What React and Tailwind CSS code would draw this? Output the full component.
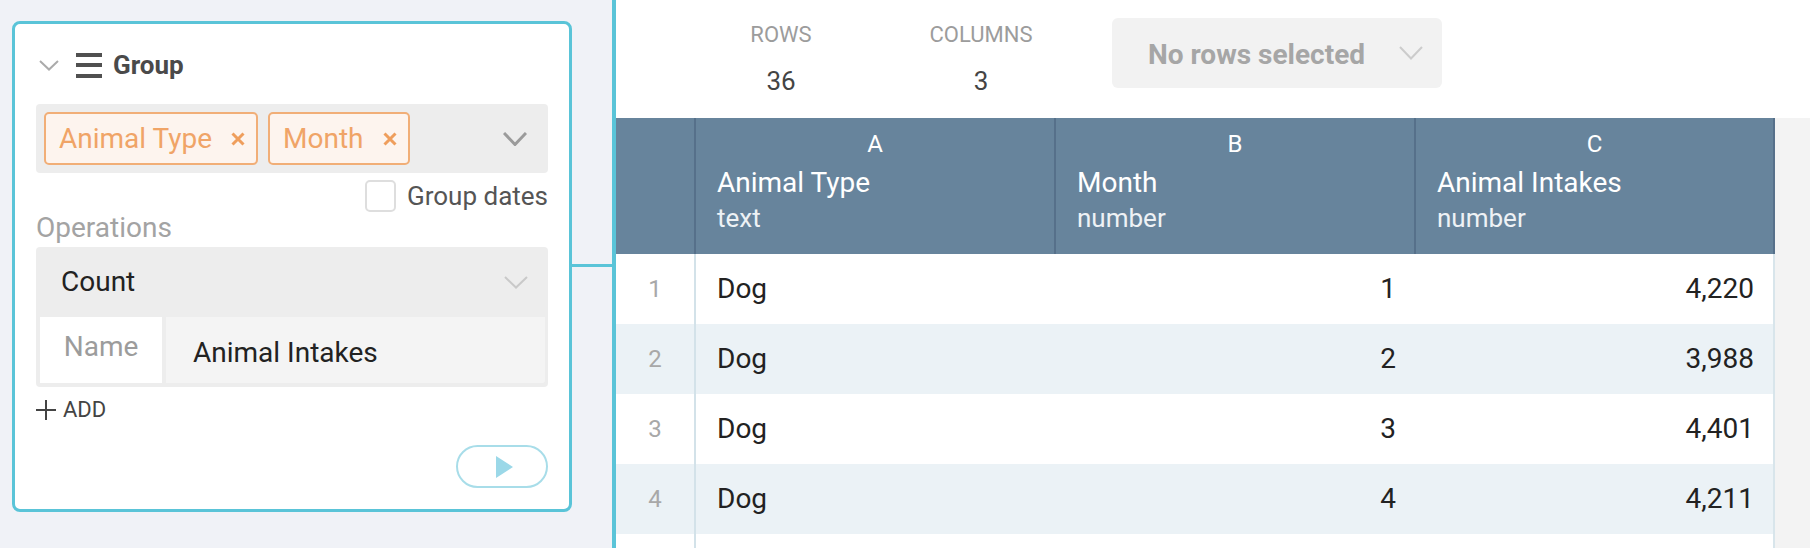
import React from 'react';

const rows = [
  { n: 1, type: 'Dog', month: '1', intakes: '4,220' },
  { n: 2, type: 'Dog', month: '2', intakes: '3,988' },
  { n: 3, type: 'Dog', month: '3', intakes: '4,401' },
  { n: 4, type: 'Dog', month: '4', intakes: '4,211' },
];

const columns = [
  { letter: 'A', name: 'Animal Type', type: 'text' },
  { letter: 'B', name: 'Month', type: 'number' },
  { letter: 'C', name: 'Animal Intakes', type: 'number' },
];

const Chevron = ({ w, h, color, stroke }) => (
  <svg width={w} height={h} viewBox={`0 0 ${w} ${h}`} fill="none">
    <path d={`M1 1 L${w / 2} ${h - 1.5} L${w - 1} 1`} stroke={color} strokeWidth={stroke} />
  </svg>
);

const CloseX = () => (
  <svg width="14" height="14" viewBox="0 0 14 14" fill="none">
    <path d="M1.5 1.5 L12.5 12.5 M12.5 1.5 L1.5 12.5" stroke="#ef9e5c" strokeWidth="3" />
  </svg>
);

const Tag = ({ label }) => (
  <div className="flex h-[53px] items-center gap-[19px] rounded-[5px] border-2 border-[#f1ae77] bg-[#fdf4ee] pl-[13px] pr-[11px]">
    <span className="text-[28px] leading-[32px] text-[#f0a467]">{label}</span>
    <CloseX />
  </div>
);

const GroupCard = () => (
  <div className="ml-[12px] mt-[21px] h-[491px] w-[560px] shrink-0 rounded-[8px] border-[3px] border-[#5ac4d8] bg-white px-[21px] pt-[28px]">
    {/* Header */}
    <div className="flex h-[26px] items-center">
      <div className="ml-[3px]">
        <Chevron w={20} h={11} color="#ababab" stroke={2} />
      </div>
      <div className="ml-[17px] flex h-[25px] w-[26px] flex-col justify-between">
        <span className="h-[4px] bg-[#505050]" />
        <span className="h-[4px] bg-[#505050]" />
        <span className="h-[4px] bg-[#505050]" />
      </div>
      <span className="ml-[11px] text-[26px] font-bold leading-[26px] text-[#4a4a4a]">Group</span>
    </div>

    {/* Group by columns */}
    <div className="mt-[26px] flex h-[69px] items-center rounded-[4px] bg-[#ededed] pl-[8px] pr-[21px]">
      <div className="flex gap-[10px]">
        <Tag label="Animal Type" />
        <Tag label="Month" />
      </div>
      <div className="ml-auto">
        <Chevron w={24} h={14} color="#9b9b9b" stroke={3} />
      </div>
    </div>

    <div className="mt-[7px] flex h-[32px] items-center justify-end">
      <span className="h-[32px] w-[31px] rounded-[5px] border-2 border-[#dedede] bg-white" />
      <span className="ml-[11px] text-[26px] leading-[30px] text-[#555]">Group dates</span>
    </div>

    <div className="mt-[2px] text-[28px] leading-[28px] text-[#a3a3a3]">Operations</div>

    {/* Operation */}
    <div className="mt-[5px] rounded-[4px] bg-[#ededed] px-[4px] pb-[4px]">
      <div className="flex h-[70px] items-center pl-[21px] pr-[16px]">
        <span className="text-[28px] leading-[32px] text-[#222]">Count</span>
        <div className="ml-auto">
          <Chevron w={24} h={13} color="#c9c9c9" stroke={2} />
        </div>
      </div>
      <div className="flex h-[66px] mr-[-1px]">
        <div className="flex w-[122px] items-center justify-center bg-white pb-[6px]">
          <span className="text-[28px] leading-[32px] text-[#9c9c9c]">Name</span>
        </div>
        <div className="ml-[4px] flex flex-1 items-center rounded-br-[3px] bg-[#f4f4f4] pl-[27px] pt-[6px]">
          <span className="text-[28px] leading-[32px] text-[#222]">Animal Intakes</span>
        </div>
      </div>
    </div>

    <div className="mt-[12px] flex h-[22px] items-center">
      <svg width="20" height="20" viewBox="0 0 20 20" fill="none">
        <path d="M10 0 V20 M0 10 H20" stroke="#444" strokeWidth="2" />
      </svg>
      <span className="ml-[7px] text-[22px] leading-[22px] text-[#444]">ADD</span>
    </div>

    <div className="mt-[24px] flex justify-end">
      <button className="flex h-[43px] w-[92px] items-center justify-center rounded-full border-2 border-[#a8dde9] bg-white pl-[4px]">
        <svg width="17" height="22" viewBox="0 0 17 22">
          <polygon points="0,0 17,11 0,22" fill="#9bd8e8" />
        </svg>
      </button>
    </div>
  </div>
);

const Stat = ({ label, value, className }) => (
  <div className={`flex w-[120px] flex-col items-center ${className}`}>
    <span className="text-[22px] leading-[24px] text-[#9c9c9c]">{label}</span>
    <span className="mt-[19px] text-[26px] leading-[30px] text-[#444]">{value}</span>
  </div>
);

const DataTable = () => (
  <div className="flex flex-1">
    <div className="w-[1159px] shrink-0">
      {/* Column headers */}
      <div className="grid h-[136px] grid-cols-[80px_360px_360px_359px] bg-[#67849c]">
        <div className="border-r-2 border-[#56708a]" />
        {columns.map((c) => (
          <div key={c.letter} className="flex flex-col border-r-2 border-[#56708a] pl-[21px] pt-[12px] text-white">
            <span className="pr-[21px] text-center text-[24px] leading-[28px]">{c.letter}</span>
            <span className="mt-[8px] text-[28px] leading-[34px]">{c.name}</span>
            <span className="mt-[3px] text-[26px] leading-[30px] text-[#eef2f5]">{c.type}</span>
          </div>
        ))}
      </div>

      {/* Rows */}
      {rows.map((r, i) => (
        <div
          key={r.n}
          className={`grid h-[70px] grid-cols-[80px_360px_360px_359px] ${i % 2 === 1 ? 'bg-[#ebf2f6]' : 'bg-white'}`}
        >
          <div className="flex items-center justify-center border-r-2 border-[#d3e2e9] text-[24px] text-[#a8a8a8]">
            {r.n}
          </div>
          <div className="flex items-center pl-[21px] text-[28px] text-[#222]">{r.type}</div>
          <div className="flex items-center justify-end pr-[20px] text-[28px] text-[#222]">{r.month}</div>
          <div className="flex items-center justify-end border-r-2 border-[#d8e5eb] pr-[19px] text-[28px] text-[#222]">
            {r.intakes}
          </div>
        </div>
      ))}
      <div className="grid h-[70px] grid-cols-[80px_360px_360px_359px] bg-white">
        <div className="border-r-2 border-[#d3e2e9]" />
        <div />
        <div />
        <div className="border-r-2 border-[#d8e5eb]" />
      </div>
    </div>
    <div className="flex-1 bg-[#f3f3f3]" />
  </div>
);

export default function App() {
  return (
    <div className="flex h-[548px] w-[1810px] overflow-hidden bg-[#f0f2f7] font-[family-name:Roboto,sans-serif]">
      <div className="flex w-[612px] shrink-0 items-start">
        <GroupCard />
        {/* connector to the table */}
        <div className="mt-[264px] h-[3px] w-[40px] bg-[#5ac4d8]" />
      </div>

      <div className="flex flex-1 flex-col border-l-4 border-[#5ac4d8] bg-white">
        <div className="flex h-[118px] shrink-0 items-start pt-[23px]">
          <Stat label="ROWS" value="36" className="ml-[105px]" />
          <Stat label="COLUMNS" value="3" className="ml-[80px]" />
          <div className="-mt-[5px] ml-[71px] flex h-[70px] w-[330px] items-center rounded-[6px] bg-[#f2f2f2] pl-[36px] pr-[19px] pt-[3px]">
            <span className="text-[28px] font-bold leading-[32px] text-[#a6a6a6]">No rows selected</span>
            <div className="ml-auto -mt-[3px]">
              <Chevron w={24} h={14} color="#cccccc" stroke={2} />
            </div>
          </div>
        </div>
        <DataTable />
      </div>
    </div>
  );
}
